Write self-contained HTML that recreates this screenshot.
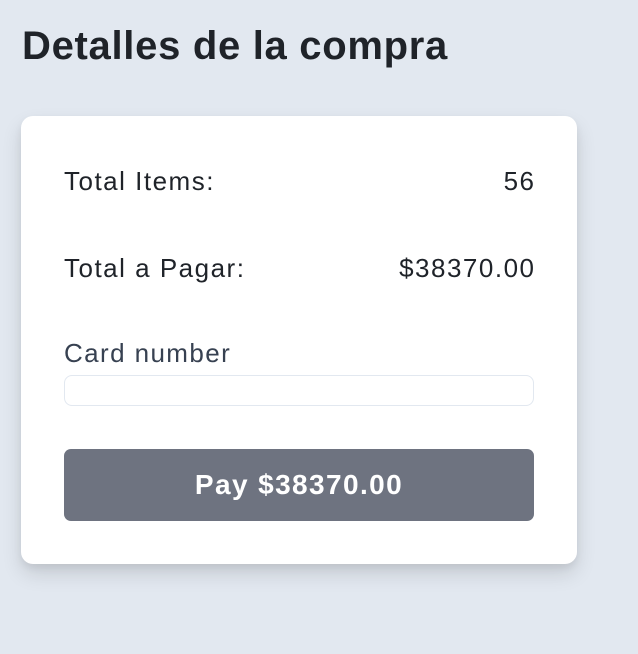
<!DOCTYPE html>
<html><head><style>
body{margin:0;width:638px;height:654px;background:#e2e8f0;font-family:"Liberation Sans",sans-serif;position:relative;overflow:hidden}
h1{position:absolute;left:22px;top:23px;margin:0;font-size:40px;font-weight:bold;color:#1f2329;letter-spacing:0.7px;line-height:46px}
.card{position:absolute;left:21px;top:116px;width:556px;height:448px;background:#fff;border-radius:12px;box-shadow:0 10px 20px rgba(0,0,0,0.12),0 4px 8px rgba(0,0,0,0.06)}
.row{position:absolute;left:43px;width:470px;font-size:26px;letter-spacing:1.5px;color:#1f2329;display:flex;justify-content:space-between;line-height:30px}
.row span:last-child{margin-right:-1.5px}
.lbl{position:absolute;left:43px;top:222px;font-size:26px;letter-spacing:1.4px;color:#374151;line-height:30px}
.inp{position:absolute;left:43px;top:259px;width:468px;height:29px;border:1px solid #e2e8f0;border-radius:8px}
.btn{position:absolute;left:43px;top:333px;width:470px;height:72px;background:#6e7380;border-radius:7px;color:#fff;font-weight:bold;font-size:28px;letter-spacing:1.4px;display:flex;align-items:center;justify-content:center}
</style></head><body>
<h1>Detalles de la compra</h1>
<div class="card">
<div class="row" style="top:50px"><span>Total Items:</span><span>56</span></div>
<div class="row" style="top:137px"><span>Total a Pagar:</span><span>$38370.00</span></div>
<div class="lbl">Card number</div>
<div class="inp"></div>
<div class="btn">Pay $38370.00</div>
</div>
</body></html>
